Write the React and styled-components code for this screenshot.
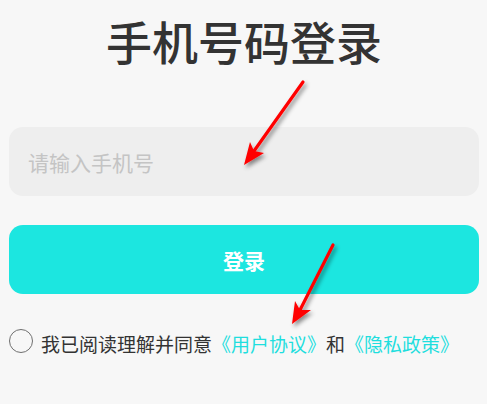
import React from "react";
import styled, { createGlobalStyle } from "styled-components";

const GlobalStyle = createGlobalStyle`
  html, body {
    margin: 0;
    padding: 0;
    background: #f7f7f7;
  }
  body {
    font-family: "Noto Sans CJK SC", "Noto Sans", sans-serif;
  }
`;

const Page = styled.div`
  position: relative;
  width: 487px;
  height: 404px;
  box-sizing: border-box;
  padding: 17px 8px 0 9px;
  display: flex;
  flex-direction: column;
  overflow: hidden;
`;

const Title = styled.h1`
  margin: 0;
  font-size: 46px;
  line-height: 46px;
  font-weight: 500;
  color: #333333;
  text-align: center;
  letter-spacing: 0;
`;

const PhoneInput = styled.input`
  margin-top: 64px;
  height: 69px;
  box-sizing: border-box;
  border: none;
  outline: none;
  border-radius: 14px;
  background: #eeeeee;
  padding: 0 19px;
  font-family: inherit;
  font-size: 21px;
  color: #333;

  &::placeholder {
    color: #c4c4c4;
  }
`;

const LoginButton = styled.button`
  margin-top: 29px;
  height: 69px;
  border: none;
  border-radius: 14px;
  background: #1ce6e0;
  color: #ffffff;
  font-family: inherit;
  font-size: 21px;
  font-weight: 700;
  cursor: pointer;
`;

const AgreeRow = styled.label`
  margin-top: 35px;
  display: flex;
  align-items: flex-start;
  gap: 8px;
`;

const Radio = styled.span`
  flex: none;
  width: 22px;
  height: 22px;
  border: 1.6px solid #6f6f6f;
  border-radius: 50%;
`;

const AgreeText = styled.span`
  margin-top: 3px;
  font-size: 19px;
  line-height: 24px;
  color: #333333;
  white-space: nowrap;
`;

const Link = styled.a`
  color: #1fdede;
  text-decoration: none;
`;

const Annotations = styled.svg`
  position: absolute;
  left: 0;
  top: 0;
  pointer-events: none;
`;

function Arrow({ from, tip, barbs, notch }) {
  return (
    <g filter="url(#arrowShadow)">
      <line
        x1={from[0]}
        y1={from[1]}
        x2={notch[0]}
        y2={notch[1]}
        stroke="#ff0000"
        strokeWidth="3.2"
        strokeLinecap="round"
      />
      <polygon
        points={`${tip[0]},${tip[1]} ${barbs[0][0]},${barbs[0][1]} ${notch[0]},${notch[1]} ${barbs[1][0]},${barbs[1][1]}`}
        fill="#ff0000"
      />
    </g>
  );
}

export default function App() {
  return (
    <>
      <GlobalStyle />
      <Page>
        <Title>手机号码登录</Title>
        <PhoneInput placeholder="请输入手机号" />
        <LoginButton>登录</LoginButton>
        <AgreeRow>
          <Radio />
          <AgreeText>
            我已阅读理解并同意<Link>《用户协议》</Link>和<Link>《隐私政策》</Link>
          </AgreeText>
        </AgreeRow>
        <Annotations width="487" height="404" viewBox="0 0 487 404">
          <defs>
            <filter id="arrowShadow" x="-50%" y="-50%" width="200%" height="200%">
              <feDropShadow dx="2" dy="3" stdDeviation="2" floodColor="#000" floodOpacity="0.45" />
            </filter>
          </defs>
          <Arrow
            from={[303, 82]}
            tip={[244, 165]}
            barbs={[[250, 142], [264, 153]]}
            notch={[254, 151]}
          />
          <Arrow
            from={[333, 245]}
            tip={[292, 324]}
            barbs={[[295, 301], [311, 310]]}
            notch={[300, 310]}
          />
        </Annotations>
      </Page>
    </>
  );
}
